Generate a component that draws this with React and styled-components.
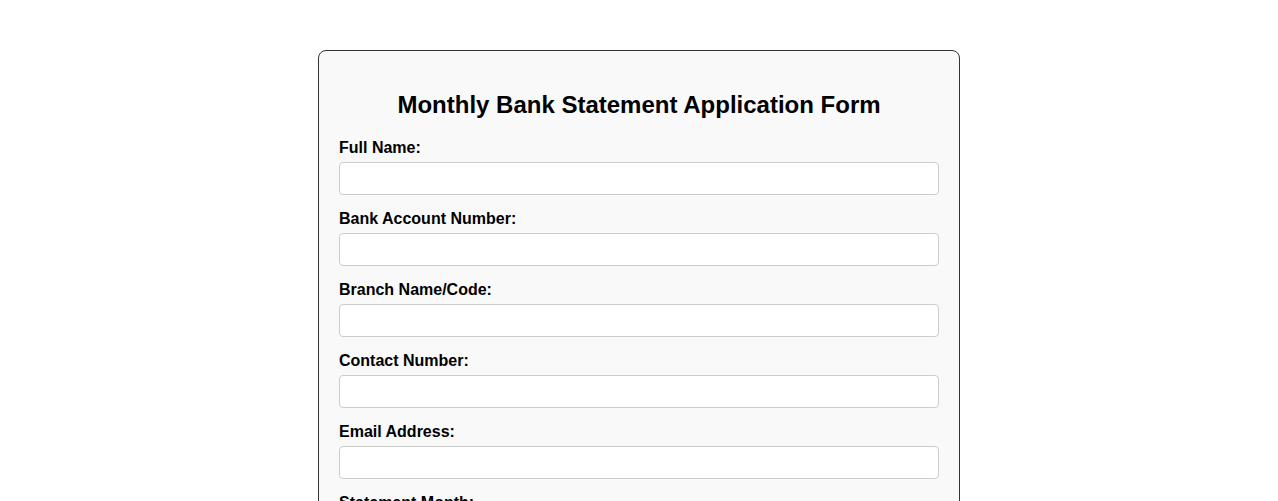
import styled, { createGlobalStyle } from "styled-components";

const Global = createGlobalStyle`
  body {
    margin: 0;
    background: #fff;
    font-family: "Liberation Sans", Arial, sans-serif;
  }
`;

const fields = [
  { id: "fullName", label: "Full Name:", type: "text" },
  { id: "account", label: "Bank Account Number:", type: "text" },
  { id: "branch", label: "Branch Name/Code:", type: "text" },
  { id: "contact", label: "Contact Number:", type: "tel" },
  { id: "email", label: "Email Address:", type: "email" },
  { id: "month", label: "Statement Month:", type: "text" },
];

export default function App() {
  return (
    <>
      <Global />
      <Form onSubmit={(e) => e.preventDefault()}>
        <Title>Monthly Bank Statement Application Form</Title>
        {fields.map((f) => (
          <Field key={f.id}>
            <Label htmlFor={f.id}>{f.label}</Label>
            <Input id={f.id} type={f.type} />
          </Field>
        ))}
        <Submit type="submit">Submit Application</Submit>
      </Form>
    </>
  );
}

const Form = styled.form`
  max-width: 600px;
  margin: 50px auto;
  padding: 20px;
  background: #f9f9f9;
  border: 1px solid #333;
  border-radius: 8px;
`;

const Title = styled.h2`
  text-align: center;
  font-size: 24px;
  font-weight: bold;
  color: #000;
  margin: 20px 0;
`;

const Field = styled.div`
  display: flex;
  flex-direction: column;
`;

const Label = styled.label`
  font-size: 16px;
  font-weight: bold;
  color: #000;
  margin-bottom: 5px;
`;

const Input = styled.input`
  box-sizing: border-box;
  width: 100%;
  height: 33px;
  padding: 8px;
  margin-bottom: 15px;
  font-size: 13px;
  font-family: "Liberation Sans", Arial, sans-serif;
  background: #fff;
  border: 1px solid #ccc;
  border-radius: 4px;
`;

const Submit = styled.button`
  padding: 10px 20px;
  font-size: 16px;
  color: #fff;
  background: #4caf50;
  border: none;
  border-radius: 4px;
`;
